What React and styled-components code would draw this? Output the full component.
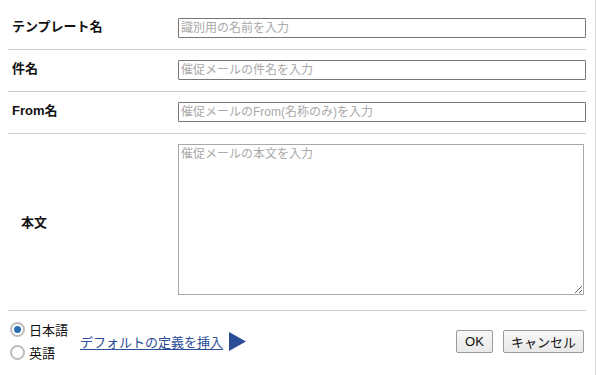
import React, { useState } from 'react';
import styled, { createGlobalStyle } from 'styled-components';

const GlobalStyle = createGlobalStyle`
  html, body {
    margin: 0;
    padding: 0;
    background: #ffffff;
  }
  body {
    font-family: 'Liberation Sans', 'Noto Sans CJK JP', sans-serif;
    color: #111;
  }
`;

const fields = [
  { key: 'name', label: 'テンプレート名', placeholder: '識別用の名前を入力' },
  { key: 'subject', label: '件名', placeholder: '催促メールの件名を入力' },
  { key: 'from', label: 'From名', placeholder: '催促メールのFrom(名称のみ)を入力' },
];

const TemplateEditor = () => {
  const [lang, setLang] = useState('ja');

  return (
    <>
      <GlobalStyle />
      <Frame>
        <Form>
          {fields.map(f => (
            <Row key={f.key}>
              <Label>{f.label}</Label>
              <TextInput type="text" placeholder={f.placeholder} />
            </Row>
          ))}

          <BodyRow>
            <Label indent>本文</Label>
            <BodyArea placeholder="催促メールの本文を入力" />
          </BodyRow>

          <Footer>
            <RadioGroup>
              <RadioLabel>
                <Radio
                  type="radio"
                  name="lang"
                  checked={lang === 'ja'}
                  onChange={() => setLang('ja')}
                />
                日本語
              </RadioLabel>
              <RadioLabel>
                <Radio
                  type="radio"
                  name="lang"
                  checked={lang === 'en'}
                  onChange={() => setLang('en')}
                />
                英語
              </RadioLabel>
            </RadioGroup>

            <InsertLink href="#">デフォルトの定義を挿入</InsertLink>
            <Arrow viewBox="0 0 17 19" aria-hidden="true">
              <polygon points="0,0 17,9.5 0,19" />
            </Arrow>

            <Buttons>
              <Button type="button" wide={false}>OK</Button>
              <Button type="button" wide>キャンセル</Button>
            </Buttons>
          </Footer>
        </Form>
      </Frame>
    </>
  );
};

const Frame = styled.div`
  width: 596px;
  height: 375px;
  box-sizing: border-box;
  border-right: 1px solid #dcdcdc;
  padding: 8px 0 0 8px;
`;

const Form = styled.div`
  width: 578px;
`;

const Row = styled.div`
  display: grid;
  grid-template-columns: 170px 1fr;
  align-items: center;
  padding: 10px 0 11px;
  border-bottom: 1px solid #cccccc;
`;

const BodyRow = styled(Row)`
  padding: 10px 0 15px;
`;

const Label = styled.div`
  padding: ${p => (p.indent ? '7px 0 0 13px' : '0 0 3px 4px')};
  font-size: 13px;
  line-height: 14px;
  font-weight: bold;
  color: #111;
`;

const TextInput = styled.input`
  display: block;
  box-sizing: border-box;
  width: 408px;
  height: 20px;
  margin: 0;
  padding: 0 2px;
  border: 1px solid #767676;
  border-radius: 1px;
  font-family: 'Liberation Sans', 'Noto Sans CJK JP', sans-serif;
  font-size: 12px;
  color: #222;

  &::placeholder {
    color: #a9a9a9;
  }
`;

const BodyArea = styled.textarea`
  display: block;
  box-sizing: border-box;
  width: 406px;
  height: 151px;
  margin: 0;
  padding: 2px;
  border: 1px solid #a9a9a9;
  font-family: 'Liberation Sans', 'Noto Sans CJK JP', sans-serif;
  font-size: 12px;
  line-height: 15px;
  resize: both;

  &::placeholder {
    color: #a9a9a9;
  }
`;

const Footer = styled.div`
  display: flex;
  align-items: center;
  padding: 7px 2px 0 2px;
`;

const RadioGroup = styled.div`
  display: flex;
  flex-direction: column;
`;

const RadioLabel = styled.label`
  display: flex;
  align-items: center;
  height: 23px;
  font-size: 13px;
  color: #111;
`;

const Radio = styled.input`
  appearance: none;
  box-sizing: border-box;
  width: 15px;
  height: 15px;
  margin: 0 4px 0 0;
  border: 2px solid #bdbdbd;
  border-radius: 50%;
  background: #fff;
  position: relative;

  &:checked::after {
    content: '';
    position: absolute;
    left: 2px;
    top: 2px;
    width: 7px;
    height: 7px;
    border-radius: 50%;
    background: #2e6db4;
  }
`;

const InsertLink = styled.a`
  margin: 0 6px 0 12px;
  font-size: 13px;
  color: #2b4c96;
  text-decoration: underline;
  text-underline-offset: 2px;
`;

const Arrow = styled.svg`
  width: 17px;
  height: 19px;
  fill: #2b4c96;
`;

const Buttons = styled.div`
  display: flex;
  gap: 10px;
  margin-left: auto;
`;

const Button = styled.button`
  height: 23px;
  min-width: ${p => (p.wide ? '81px' : '37px')};
  padding: 0 7px;
  border: 1px solid #9a9a9a;
  border-radius: 2px;
  background: linear-gradient(#f7f7f7, #e9e9e9);
  font-family: 'Liberation Sans', 'Noto Sans CJK JP', sans-serif;
  font-size: 13px;
  color: #111;
`;

export default TemplateEditor;
